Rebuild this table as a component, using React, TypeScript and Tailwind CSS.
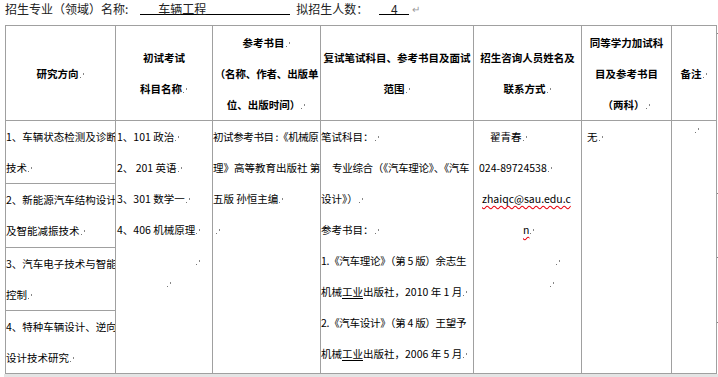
import React from "react";

const Mark = () => (
  <svg width="5" height="6" viewBox="0 0 5 6" className="ml-[1px] inline-block align-baseline">
    <rect x="0" y="5" width="1" height="1" fill="#777" />
    <rect x="3" y="1" width="1" height="2" fill="#888" />
  </svg>
);

const HeadCell = ({ lines, last }: { lines: string[]; last?: boolean }) => (
  <div className="flex flex-col items-center justify-center border-r border-b border-[#a0a0a0] text-center font-bold leading-[31px] whitespace-nowrap overflow-hidden">
    {lines.map((l, i) => (
      <div key={i}>
        {l}
        {i === lines.length - 1 && !last && <Mark />}
        {i === lines.length - 1 && last && <Mark />}
      </div>
    ))}
  </div>
);

export default function App() {
  const directions = [
    { a: "1、车辆状态检测及诊断", b: "技术", h: "h-[64px]" },
    { a: "2、新能源汽车结构设计", b: "及智能减振技术", h: "h-[64px]" },
    { a: "3、汽车电子技术与智能", b: "控制", h: "h-[64px]" },
  ];

  return (
    <div className="w-[718px] h-[377px] overflow-hidden bg-white text-black font-['Noto_Sans_CJK_SC',sans-serif] text-[10.5px]">
      {/* title line */}
      <div className="flex items-start h-[25px] pl-[5px] text-[12px] leading-[18px] text-[#222]">
        <span>招生专业（领域）名称:</span>
        <span className="ml-[12px] w-[150px] h-[15px] border-b border-black pl-[18px] leading-[17px]">车辆工程</span>
        <span className="ml-[6px]">拟招生人数：</span>
        <span className="ml-[11px] w-[30px] h-[15px] border-b border-black text-center leading-[17px]">4</span>
        <span className="ml-[3px] text-[10px] text-[#999]">↵</span>
      </div>

      <div className="flex">
        <div className="ml-[5px] border-l border-t border-[#a0a0a0]">
          {/* header */}
          <div className="grid grid-cols-[110px_97px_108px_153px_108px_90px_45px] h-[95px]">
            <HeadCell lines={["研究方向"]} />
            <HeadCell lines={["初试考试", "科目名称"]} />
            <div className="flex flex-col items-center justify-center border-r border-b border-[#a0a0a0] text-center font-bold leading-[31px] whitespace-nowrap overflow-hidden">
              <div>参考书目<Mark /></div>
              <div className="tracking-[-0.15px]">（名称、作者、出版单</div>
              <div>位、出版时间）<Mark /></div>
            </div>
            <HeadCell lines={["复试笔试科目、参考书目及面试", "范围"]} />
            <HeadCell lines={["招生咨询人员姓名及", "联系方式"]} />
            <HeadCell lines={["同等学力加试科", "目及参考书目", "（两科）"]} />
            <HeadCell lines={["备注"]} last />
          </div>

          {/* body */}
          <div className="grid grid-cols-[110px_97px_108px_153px_108px_90px_45px] h-[253px] leading-[31px] whitespace-nowrap">
            <div className="flex flex-col border-r border-b border-[#a0a0a0] overflow-hidden">
              {directions.map((d) => (
                <div key={d.a} className={`${d.h} border-b border-[#a0a0a0]`}>
                  <div>{d.a}</div>
                  <div>{d.b}<Mark /></div>
                </div>
              ))}
              <div className="flex-1">
                <div>4、特种车辆设计、逆向</div>
                <div>设计技术研究<Mark /></div>
              </div>
            </div>

            <div className="border-r border-b border-[#a0a0a0] pl-[1px] overflow-hidden">
              <div>1、101 政治<Mark /></div>
              <div>2、 201 英语<Mark /></div>
              <div>3、301 数学一<Mark /></div>
              <div>4、406 机械原理<Mark /></div>
              <div className="pl-[78px]"><Mark /></div>
              <div className="pl-[49px] h-[14px] leading-[14px]"><Mark /></div>
            </div>

            <div className="border-r border-b border-[#a0a0a0] overflow-hidden">
              <div className="tracking-[-0.4px]">初试参考书目 :《机械原</div>
              <div>理》高等教育出版社 第</div>
              <div>五版 孙恒主编<Mark /></div>
              <div className="pl-[2px]"><Mark /></div>
            </div>

            <div className="border-r border-b border-[#a0a0a0] overflow-hidden">
              <div>笔试科目：<Mark /></div>
              <div className="pl-[11px] tracking-[-0.3px]">专业综合（《汽车理论》、《汽车</div>
              <div>设计》）<Mark /></div>
              <div>参考书目：<Mark /></div>
              <div className="tracking-[-0.3px]">1.《汽车理论》（第 5 版）余志生</div>
              <div>
                机械<span className="underline underline-offset-2">工业</span>出版社，2010 年 1 月<Mark />
              </div>
              <div className="tracking-[-0.3px]">2.《汽车设计》（第 4 版）王望予</div>
              <div>
                机械<span className="underline underline-offset-2">工业</span>出版社，2006 年 5 月<Mark />
              </div>
            </div>

            <div className="border-r border-b border-[#a0a0a0] overflow-hidden">
              <div className="pl-[16px]">翟青春<Mark /></div>
              <div className="pl-[5px]">024-89724538<Mark /></div>
              <div className="pl-[8px]">
                <span className="underline decoration-wavy decoration-red-600 underline-offset-2">zhaiqc@sau.edu.c</span>
              </div>
              <div className="pl-[49px]">
                <span className="underline decoration-wavy decoration-red-600 underline-offset-2">n</span>
                <Mark />
              </div>
              <div className="pl-[81px]"><Mark /></div>
              <div className="pl-[75px] h-[14px] leading-[14px]"><Mark /></div>
            </div>

            <div className="border-r border-b border-[#a0a0a0] pl-[5px] overflow-hidden">
              <div>无<Mark /></div>
            </div>

            <div className="border-r border-b border-[#a0a0a0] pl-[22px] overflow-hidden">
              <div className="h-[16px] leading-[16px]"><Mark /></div>
            </div>
          </div>
        </div>

        {/* row end ticks */}
        <div className="flex flex-col w-[2px]">
          <div className="h-[8px]" />
          <div className="h-[1px] bg-[#888]" />
          <div className="h-[159px]" />
          <div className="h-[1px] bg-[#888]" />
          <div className="h-[63px]" />
          <div className="h-[1px] bg-[#888]" />
          <div className="h-[64px]" />
          <div className="h-[1px] bg-[#888]" />
        </div>
      </div>
      <div className="ml-[4px] h-[3px] bg-[#e4e4e4]" />
    </div>
  );
}
